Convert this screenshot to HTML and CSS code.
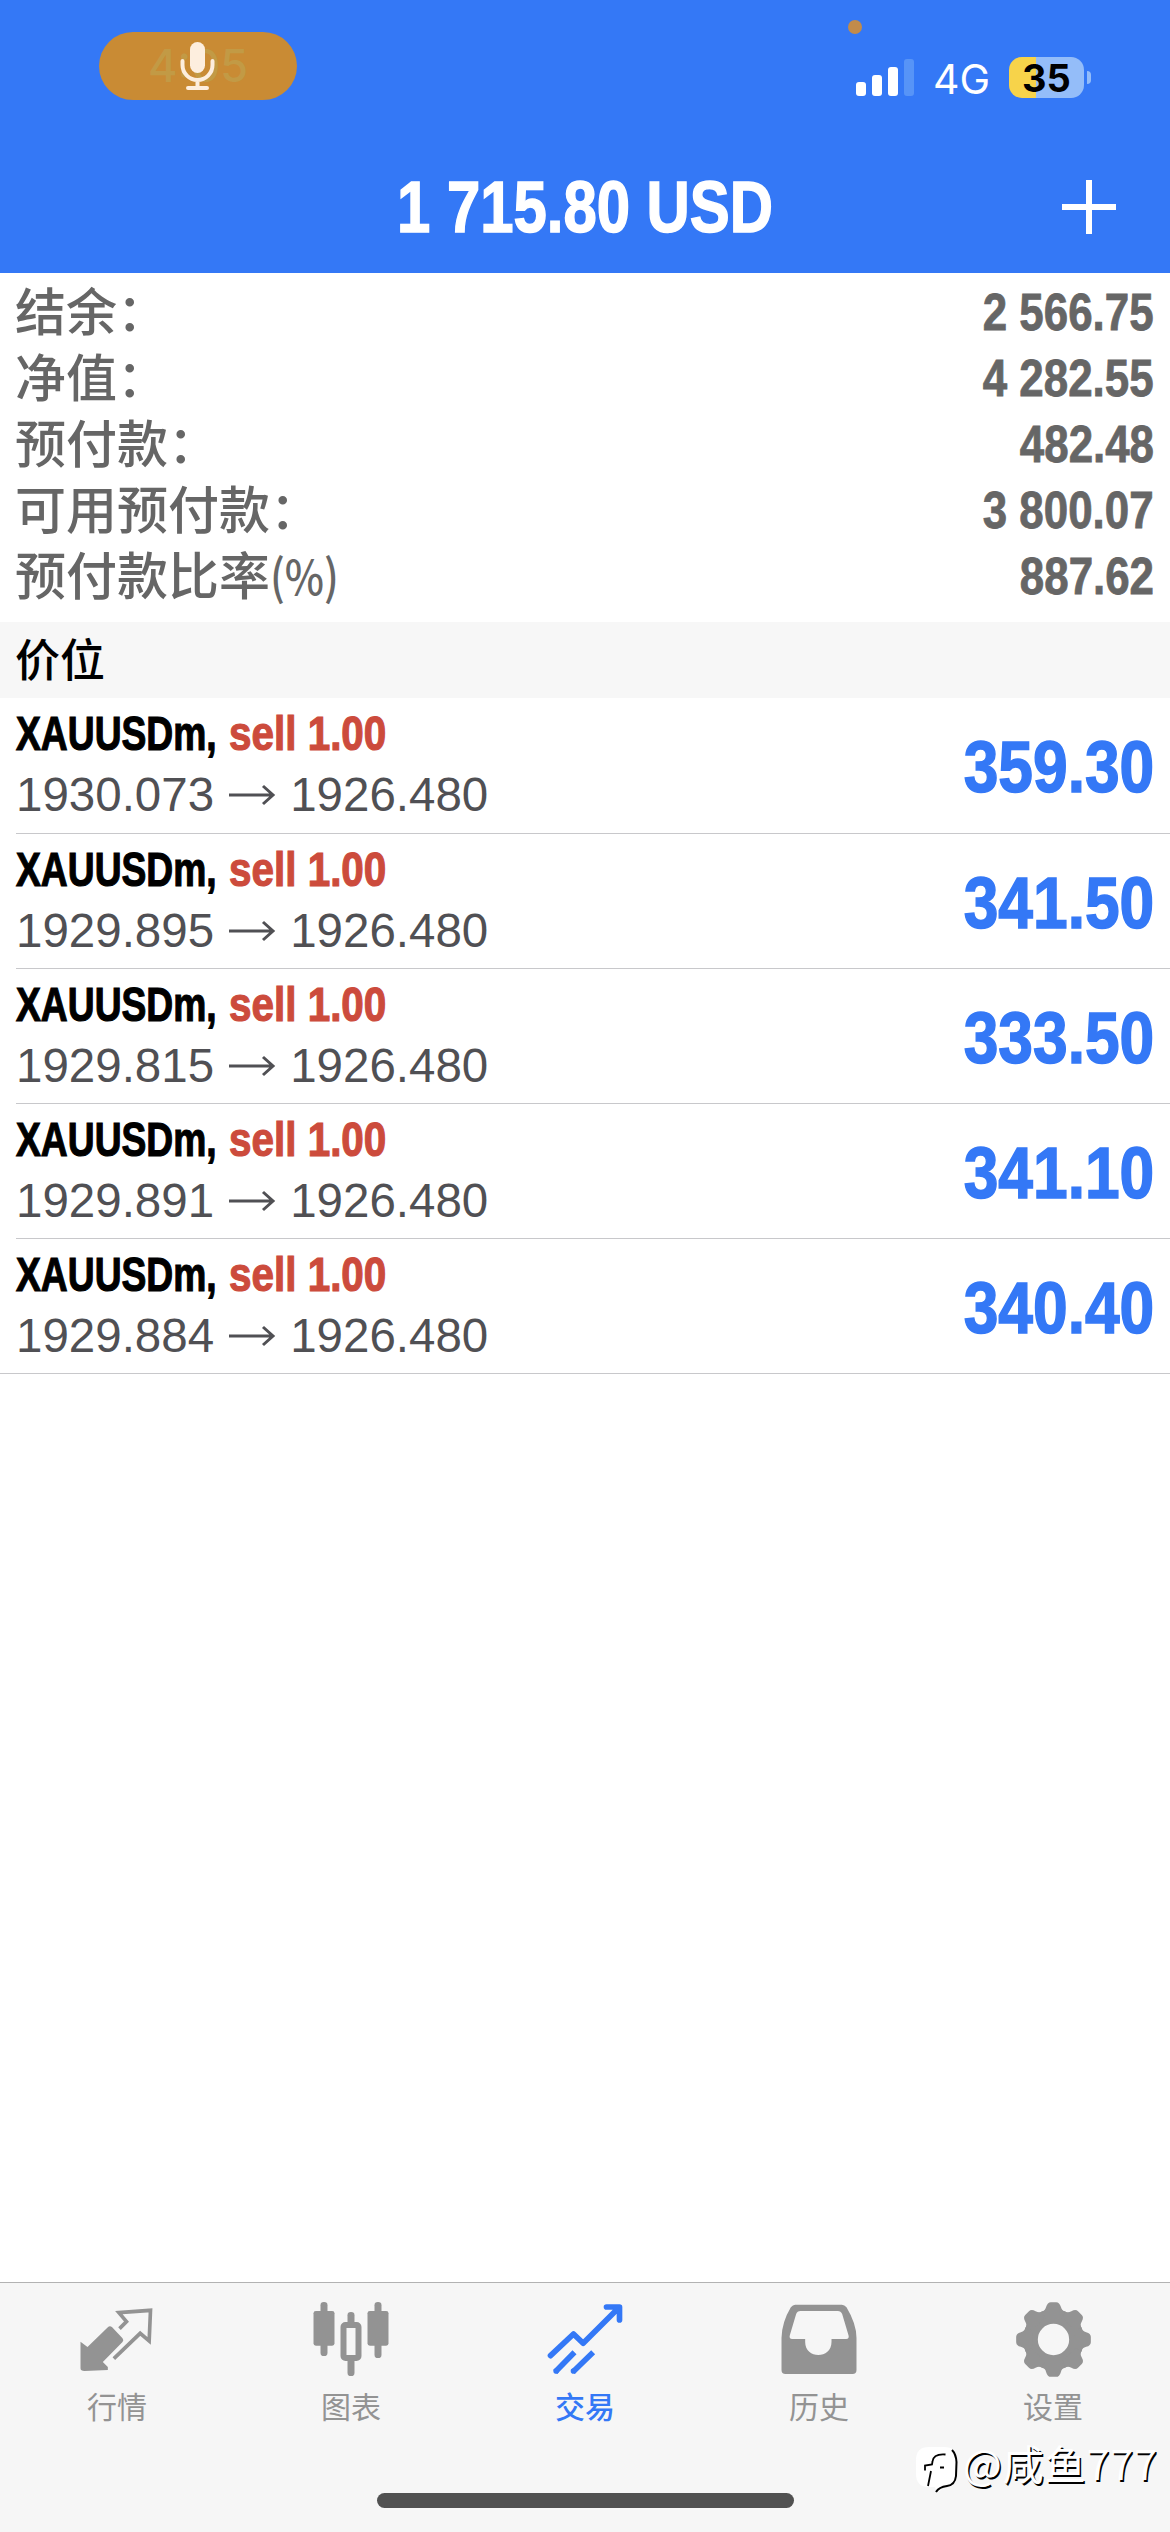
FILE: index.html
```html
<!DOCTYPE html>
<html lang="zh-CN">
<head>
<meta charset="utf-8">
<title>交易</title>
<link rel="stylesheet" href="styles.css">
</head>
<body>
<div class="screen">
  <header class="header">
    <div class="status">
      <div class="pill">
        <span class="pill-time">4:05</span>
        <svg class="mic" viewBox="0 0 36 52"><rect x="10" y="2" width="15" height="31" rx="7.5" fill="#fdeede"/><path d="M2.500 21v4a15 15 0 0 0 30 0v-4M17.500 40v7M8 48h19" fill="none" stroke="#fdeede" stroke-width="4" stroke-linecap="round"/></svg>
      </div>
      <div class="status-right">
        <span class="dot"></span>
        <svg class="signal" viewBox="0 0 58 38"><g fill="#fff"><rect x="0" y="23" width="10" height="14" rx="3"/><rect x="16" y="16" width="10" height="21" rx="3"/><rect x="32" y="8" width="10" height="29" rx="3"/></g><rect x="48" y="0" width="10" height="37" rx="3" fill="#5794f7"/></svg>
        <span class="network">4G</span>
        <span class="battery">35</span>
        <span class="nub"></span>
      </div>
    </div>
    <div class="titlebar">
      <h1 class="title">1 715.80 USD</h1>
      <svg class="plus" viewBox="0 0 54 54"><path d="M0 27h54M27 0v54" stroke="#fff" stroke-width="6"/></svg>
    </div>
  </header>

  <section class="summary">
    <div class="row"><span class="label">结余：</span><span class="amount">2 566.75</span></div>
    <div class="row"><span class="label">净值：</span><span class="amount">4 282.55</span></div>
    <div class="row"><span class="label">预付款：</span><span class="amount">482.48</span></div>
    <div class="row"><span class="label">可用预付款：</span><span class="amount">3 800.07</span></div>
    <div class="row"><span class="label">预付款比率<span class="unit">(%)</span></span><span class="amount">887.62</span></div>
  </section>

  <h2 class="section">价位</h2>

  <main class="positions">
    <article class="position"><div class="info"><div class="deal"><span class="symbol">XAUUSDm,</span><span class="side">sell 1.00</span></div><div class="prices"><span>1930.073</span><svg class="arrow" viewBox="0 0 46 20"><path d="M0 10h44M34 1l10 9-10 9"/></svg><span>1926.480</span></div></div><span class="profit">359.30</span></article>
    <article class="position"><div class="info"><div class="deal"><span class="symbol">XAUUSDm,</span><span class="side">sell 1.00</span></div><div class="prices"><span>1929.895</span><svg class="arrow" viewBox="0 0 46 20"><path d="M0 10h44M34 1l10 9-10 9"/></svg><span>1926.480</span></div></div><span class="profit">341.50</span></article>
    <article class="position"><div class="info"><div class="deal"><span class="symbol">XAUUSDm,</span><span class="side">sell 1.00</span></div><div class="prices"><span>1929.815</span><svg class="arrow" viewBox="0 0 46 20"><path d="M0 10h44M34 1l10 9-10 9"/></svg><span>1926.480</span></div></div><span class="profit">333.50</span></article>
    <article class="position"><div class="info"><div class="deal"><span class="symbol">XAUUSDm,</span><span class="side">sell 1.00</span></div><div class="prices"><span>1929.891</span><svg class="arrow" viewBox="0 0 46 20"><path d="M0 10h44M34 1l10 9-10 9"/></svg><span>1926.480</span></div></div><span class="profit">341.10</span></article>
    <article class="position"><div class="info"><div class="deal"><span class="symbol">XAUUSDm,</span><span class="side">sell 1.00</span></div><div class="prices"><span>1929.884</span><svg class="arrow" viewBox="0 0 46 20"><path d="M0 10h44M34 1l10 9-10 9"/></svg><span>1926.480</span></div></div><span class="profit">340.40</span></article>
  </main>

  <footer class="footer">
    <nav class="tabs">
      <a class="tab">
        <svg class="icon" viewBox="238.500 96 225 225"><path fill="currentColor" d="M240 215l21 16 61-59q6-7 13 0l31 33q5 6 0 11l-59 60 15 15v9l-70 3q-12 0-12-8z"/><path fill="none" stroke="currentColor" stroke-width="11" d="M357 176l21-21-23-27 95-7-4 92-27-23-79 76"/></svg>
        <span>行情</span>
      </a>
      <a class="tab">
        <svg class="icon" viewBox="940.500 96 225 225"><g fill="currentColor"><rect x="960" y="96" width="21" height="162" rx="10"/><rect x="939" y="123" width="63" height="104" rx="7"/><rect x="1122" y="96" width="21" height="168" rx="10"/><rect x="1101" y="123" width="63" height="104" rx="7"/><rect x="1041" y="126" width="21" height="44" rx="10"/><rect x="1041" y="258" width="21" height="60" rx="10"/></g><rect x="1029" y="165" width="45" height="99" rx="6" fill="none" stroke="currentColor" stroke-width="18"/></svg>
        <span>图表</span>
      </a>
      <a class="tab active">
        <svg class="icon" viewBox="442.500 96 225 225"><g fill="none" stroke="currentColor" stroke-width="17" stroke-linecap="round" stroke-linejoin="round"><path d="M450 257l69-65 29 28L654 114M618 111h39v39"/><path stroke-linecap="butt" d="M464 306l58-59M517 306l61-59"/></g><g fill="currentColor"><circle cx="467" cy="303" r="8.500"/><circle cx="519" cy="303" r="8.500"/><path d="M630 106h32v40z"/></g></svg>
        <span>交易</span>
      </a>
      <a class="tab">
        <svg class="icon" viewBox="64.500 96 225 225"><path fill="currentColor" fill-rule="evenodd" d="M104 104H244Q252 104 258 112Q288 162 288 204V300Q288 312 276 312H75Q63 312 63 300V204Q64 157 91 112Q97 104 104 104zM120 123Q110 123 107 132L88 196Q85 207 95 207H134V216C134 268 213 268 213 216V207H257Q267 207 264 196L245 132Q241 123 232 123z"/></svg>
        <span>历史</span>
      </a>
      <a class="tab">
        <svg class="icon" viewBox="-112.500 -112.500 225 225">
          <defs><path id="tooth" d="M-35-84Q-25-86-22-98Q-18-112-8-112H8Q18-112 22-98Q25-86 35-84L24-64H-24z"/></defs>
          <circle r="69" fill="none" stroke="currentColor" stroke-width="44"/>
          <g fill="currentColor"><use href="#tooth"/><use href="#tooth" transform="rotate(45)"/><use href="#tooth" transform="rotate(90)"/><use href="#tooth" transform="rotate(135)"/><use href="#tooth" transform="rotate(180)"/><use href="#tooth" transform="rotate(225)"/><use href="#tooth" transform="rotate(270)"/><use href="#tooth" transform="rotate(315)"/></g>
        </svg>
        <span>设置</span>
      </a>
    </nav>
    <div class="home"></div>
    <div class="watermark">
      <svg class="logo" viewBox="0 0 44 48"><path fill="#fff" d="M13 0h15q13 0 13 13v15q0 11-12 12l-8 6-2-6h-6Q0 40 0 27V13Q0 0 13 0z"/><path fill="none" stroke="#000" stroke-width="1.800" d="M29.500 7.500q-12-1-13 7l-.5 3-7 1v5M15 24l-3 15M24 20.500h4"/><path fill="none" stroke="#000" stroke-width="2" d="M36 3q4 4 4.500 12l-.5 14q-1 9-9 10-8 1-11 6"/></svg>
      <span class="handle">@咸鱼777</span>
    </div>
  </footer>
</div>
</body>
</html>
```
FILE: styles.css
```css
* { box-sizing: border-box; }

body {
  margin: 0;
  background: #fff;
  font-family: "Liberation Sans", "Noto Sans CJK SC", sans-serif;
}

h1, h2 { margin: 0; }
svg { display: block; flex: none; overflow: visible; }
span { white-space: pre; }

.screen {
  width: 1170px;
  height: 2532px;
  display: flex;
  flex-direction: column;
}

/* Header */
.header {
  height: 273px;
  flex: none;
  background: #3478f6;
  color: #fff;
}

.status {
  height: 140px;
  padding: 32px 79px 0 99px;
  display: flex;
  justify-content: space-between;
  align-items: flex-start;
}

.pill {
  position: relative;
  width: 198px;
  height: 68px;
  border-radius: 34px;
  background: #c98b34;
  display: flex;
  align-items: center;
  justify-content: center;
}

.pill-time {
  font: 500 45px/68px Inter, sans-serif;
  color: #c29a45;
}

.mic {
  position: absolute;
  left: 81px;
  top: 8px;
  width: 36px;
  height: 52px;
}

.status-right {
  position: relative;
  height: 41px;
  margin-top: 25px;
  display: flex;
  align-items: center;
}

.dot {
  position: absolute;
  left: -8px;
  top: -37px;
  width: 14px;
  height: 14px;
  border-radius: 50%;
  background: #c28b4b;
}

.signal { width: 58px; height: 38px; }

.network {
  width: 57px;
  margin-left: 19px;
  padding-top: 3px;
  font: 400 41px/41px Inter, sans-serif;
}

.battery {
  width: 75px;
  height: 41px;
  margin-left: 19px;
  border-radius: 13px;
  background: linear-gradient(90deg, #f7d34a 27px, #94bdf9 27px);
  color: #000;
  font: 700 38px/42px Inter, sans-serif;
  text-align: center;
}

.nub {
  width: 4px;
  height: 13px;
  margin-left: 3px;
  border-radius: 0 4px 4px 0;
  background: #94bdf9;
}

.titlebar {
  height: 133px;
  padding: 0 54px 0 108px;
  display: flex;
  align-items: center;
}

.title {
  flex: 1;
  font-size: 73px;
  line-height: 133px;
  text-align: center;
  white-space: nowrap;
  -webkit-text-stroke: 1.500px currentColor;
  transform: scaleX(.82);
}

.plus { width: 54px; height: 54px; }

/* Account summary */
.summary {
  height: 349px;
  flex: none;
  padding: 6px 16px 0;
  color: #666;
}

.row {
  height: 66px;
  display: flex;
  justify-content: space-between;
}

.label {
  margin: -3px 0 0 -1px;
  font: 500 51px/66px "Noto Sans CJK SC", sans-serif;
}

.unit {
  display: inline-block;
  font-size: 48px;
  transform: scaleX(.87);
  transform-origin: left;
}

.amount {
  font: 700 51px/67px "Liberation Sans", sans-serif;
  -webkit-text-stroke: .800px currentColor;
  transform: scaleX(.86);
  transform-origin: right;
}

.section {
  height: 76px;
  flex: none;
  padding-left: 15px;
  background: #f7f7f7;
  font: 500 45px/72px "Noto Sans CJK SC", sans-serif;
}

/* Open positions */
.positions { flex: 1; }

.position {
  height: 135px;
  margin-left: 16px;
  padding-right: 16px;
  border-bottom: 1px solid #c8c8cb;
  display: flex;
  justify-content: space-between;
  align-items: center;
}

.position:first-child { height: 136px; }

.position:last-child {
  margin-left: 0;
  padding-left: 16px;
}

.info { padding-bottom: 3px; }

.deal {
  height: 62px;
  display: flex;
  font: 700 49px/62px "Liberation Sans", sans-serif;
  -webkit-text-stroke: 1.200px currentColor;
}

.symbol {
  width: 213px;
  transform: scaleX(.76);
  transform-origin: left;
}

.side {
  color: #cc4b3c;
  transform: scaleX(.825);
  transform-origin: left;
}

.prices {
  height: 62px;
  display: flex;
  align-items: center;
  color: #505054;
  font-size: 47.500px;
  line-height: 62px;
}

.arrow {
  width: 46px;
  height: 20px;
  margin: 0 15px;
  fill: none;
  stroke: #505054;
  stroke-width: 3;
}

.profit {
  padding-top: 3px;
  color: #3478f6;
  font-size: 72px;
  font-weight: 700;
  -webkit-text-stroke: 1.500px currentColor;
  transform: scaleX(.865);
  transform-origin: right;
}

/* Bottom navigation */
.footer {
  position: relative;
  height: 250px;
  flex: none;
  border-top: 1px solid #b2b2b2;
  background: #f6f6f6;
  display: flex;
  flex-direction: column;
  align-items: center;
}

.tabs {
  width: 1170px;
  height: 210px;
  padding-top: 19px;
  display: flex;
}

.tab {
  flex: 1;
  display: flex;
  flex-direction: column;
  align-items: center;
  color: #939393;
  font: 400 30px/44px "Noto Sans CJK SC", sans-serif;
}

.tab span { margin-top: 6px; }
.tab.active { color: #3478f6; font-weight: 500; }
.icon { width: 75px; height: 75px; }

.home {
  width: 417px;
  height: 15px;
  border-radius: 8px;
  background: #515151;
}

.watermark {
  position: absolute;
  left: 916px;
  top: 164px;
  display: flex;
}

.logo { width: 44px; height: 48px; margin-right: 3px; }

.handle {
  margin-top: -9px;
  color: #fff;
  font: 400 41px/48px "Noto Sans CJK SC", sans-serif;
  letter-spacing: 1px;
  text-shadow: 1.500px 1.500px 0 #000;
}
```
